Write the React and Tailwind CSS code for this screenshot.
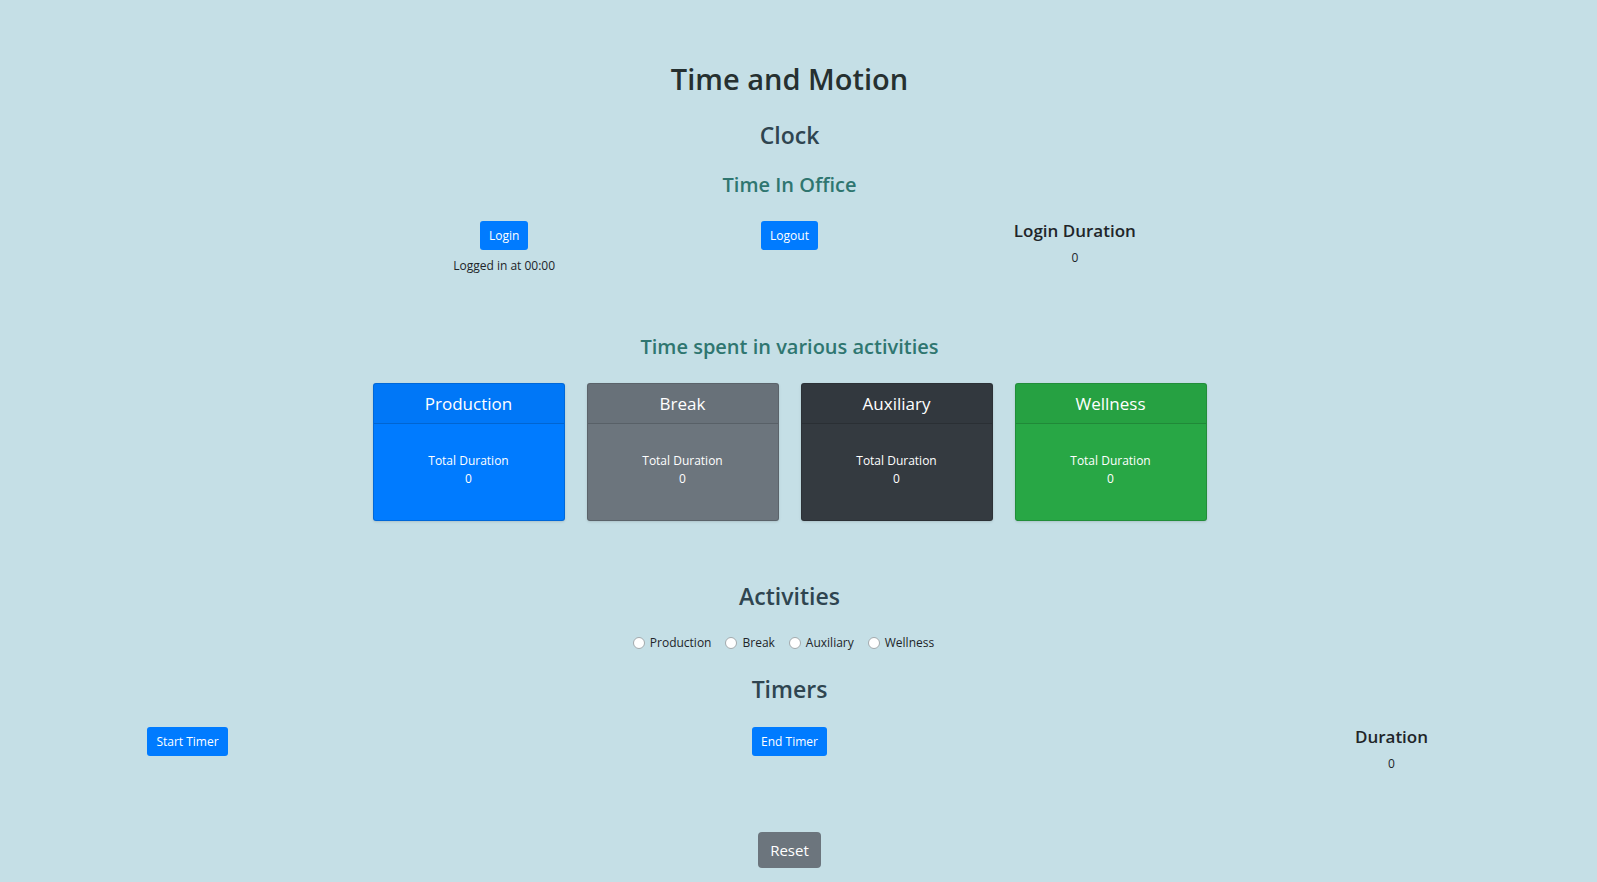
import React from 'react'

const activities = [
  { name: 'Production', color: 'bg-[#007bff]' },
  { name: 'Break', color: 'bg-[#6c757d]' },
  { name: 'Auxiliary', color: 'bg-[#343a40]' },
  { name: 'Wellness', color: 'bg-[#28a745]' },
]

function Button({ children }) {
  return (
    <button type="button" className="h-[29px] rounded-[3px] bg-[#007bff] px-[9px] text-[12px] leading-[17px] text-white">
      {children}
    </button>
  )
}

function SectionTitle({ children }) {
  return <h2 className="text-[23px] leading-[28px] font-semibold text-[#2f4550]">{children}</h2>
}

function SubTitle({ children }) {
  return <h3 className="text-[20px] leading-[24px] font-semibold text-[#2f7670]">{children}</h3>
}

function Duration({ title }) {
  return (
    <>
      <h4 className="text-[17px] leading-[20px] font-semibold">{title}</h4>
      <p className="mt-2">0</p>
    </>
  )
}

function ActivityCard({ name, color }) {
  return (
    <article className={`flex h-[138px] flex-col rounded-[3px] border border-black/15 text-white shadow-sm ${color}`}>
      <h4 className="border-b border-black/15 bg-black/[0.03] py-[9px] text-[17px] leading-[21px]">{name}</h4>
      <div className="flex flex-1 flex-col items-center justify-center pb-1 leading-[18px]">
        <p>Total Duration</p>
        <p>0</p>
      </div>
    </article>
  )
}

export default function App() {
  return (
    <main className="min-h-screen bg-[#c5dfe6] pt-[61px] pr-[18px] pb-[14px] text-center font-['Open_Sans','Noto_Sans',sans-serif] text-[12px] leading-[17px] text-[#212529]">
      <header>
        <h1 className="text-[29px] leading-[36px] font-semibold text-[#263030]">Time and Motion</h1>
      </header>

      <section className="mx-auto mt-6 max-w-[856px]">
        <SectionTitle>Clock</SectionTitle>
        <div className="mt-6">
          <SubTitle>Time In Office</SubTitle>
        </div>
        <div className="mt-6 grid grid-cols-3">
          <div>
            <Button>Login</Button>
            <p className="mt-[7px]">Logged in at 00:00</p>
          </div>
          <div>
            <Button>Logout</Button>
          </div>
          <div>
            <Duration title="Login Duration" />
          </div>
        </div>

        <div className="mt-[61px]">
          <SubTitle>Time spent in various activities</SubTitle>
        </div>
        <div className="mt-6 grid grid-cols-4 gap-[22px] px-[11px]">
          {activities.map((a) => (
            <ActivityCard key={a.name} name={a.name} color={a.color} />
          ))}
        </div>
      </section>

      <section className="mt-[61px]">
        <SectionTitle>Activities</SectionTitle>
        <div className="mt-6 flex justify-center gap-[14px] pr-3">
          {activities.map((a) => (
            <label key={a.name} className="flex items-center gap-[5px]">
              <input
                type="radio"
                name="activity"
                value={a.name}
                className="size-3 appearance-none rounded-full border border-[#a3aaad] bg-white checked:border-4 checked:border-[#007bff]"
              />
              {a.name}
            </label>
          ))}
        </div>
      </section>

      <section className="mt-6">
        <SectionTitle>Timers</SectionTitle>
        <div className="mt-6 flex justify-between">
          <div className="w-[375px]">
            <Button>Start Timer</Button>
          </div>
          <div className="w-[375px]">
            <Button>End Timer</Button>
          </div>
          <div className="w-[375px]">
            <Duration title="Duration" />
          </div>
        </div>
        <button type="button" className="mt-[60px] h-9 rounded-[4px] bg-[#6c757d] px-3 text-[15px] leading-[20px] text-white">
          Reset
        </button>
      </section>
    </main>
  )
}
